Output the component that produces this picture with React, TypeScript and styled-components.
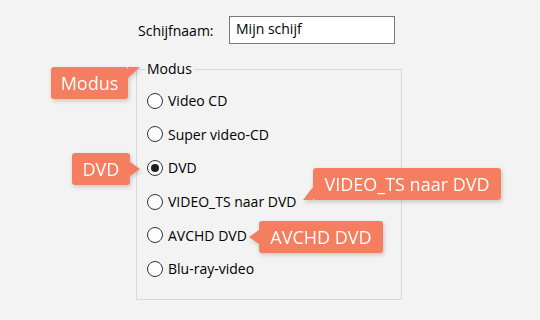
import React from 'react';
import styled, { createGlobalStyle, css } from 'styled-components';

const GlobalStyle = createGlobalStyle`
  html, body {
    margin: 0;
    padding: 0;
    background: #f3f3f3;
  }
  body {
    font-family: "Open Sans", "Noto Sans", sans-serif;
    color: #000;
  }
`;

type TailSide = 'topRight' | 'right' | 'bottomLeft' | 'left';

const Stage = styled.div`
  position: relative;
  width: 540px;
  height: 320px;
  overflow: hidden;
  padding: 16px 0 0 138px;
  box-sizing: border-box;
`;

const NameRow = styled.div`
  display: flex;
  align-items: center;
  gap: 16px;
  height: 28px;
`;

const FieldLabel = styled.label`
  font-size: 14px;
  width: 75px;
  white-space: nowrap;
`;

const NameInput = styled.div`
  width: 166px;
  height: 28px;
  box-sizing: border-box;
  background: #fff;
  border: 1px solid #7a7a7a;
  padding: 2px 6px;
  font-size: 14px;
  line-height: 20px;
`;

const GroupBox = styled.fieldset`
  margin: 17px 0 0 -2px;
  width: 266px;
  box-sizing: border-box;
  border: 1px solid #d9d9d9;
  padding: 7px 0 13px 8px;
`;

const GroupLegend = styled.legend`
  padding: 0 2px;
  font-size: 14px;
  line-height: 16px;
`;

const OptionList = styled.div`
  display: flex;
  flex-direction: column;
  padding-left: 2px;
`;

const Option = styled.div`
  display: flex;
  align-items: center;
  gap: 5px;
  height: 33.6px;
  font-size: 14px;
`;

const RadioDot = styled.span<{ $checked?: boolean }>`
  width: 16px;
  height: 16px;
  box-sizing: border-box;
  border-radius: 50%;
  border: 1px solid #333;
  background: #fdfdfd;
  display: flex;
  align-items: center;
  justify-content: center;

  &::after {
    content: '';
    width: 8px;
    height: 8px;
    border-radius: 50%;
    background: #1f1f1f;
    display: ${p => (p.$checked ? 'block' : 'none')};
  }
`;

const tails: Record<TailSide, ReturnType<typeof css>> = {
  topRight: css`
    left: 100%;
    top: 0;
    width: 12px;
    height: 11px;
    clip-path: polygon(0 0, 100% 0, 0 100%);
  `,
  right: css`
    left: 100%;
    top: calc(50% - 7px);
    width: 10px;
    height: 14px;
    clip-path: polygon(0 0, 100% 50%, 0 100%);
  `,
  bottomLeft: css`
    right: 100%;
    bottom: 0;
    width: 10px;
    height: 13px;
    clip-path: polygon(100% 0, 100% 100%, 0 100%);
  `,
  left: css`
    right: 100%;
    top: calc(50% - 7px);
    width: 10px;
    height: 14px;
    clip-path: polygon(100% 0, 0 50%, 100% 100%);
  `,
};

const Callout = styled.div<{ $tail: TailSide }>`
  position: absolute;
  height: 32px;
  box-sizing: border-box;
  background: #f47e5f;
  color: #fff;
  border-radius: 3px;
  font-family: "Open Sans", sans-serif;
  font-size: 18px;
  line-height: 32px;
  text-align: center;
  white-space: nowrap;
  filter: drop-shadow(1px 2px 2px rgba(0, 0, 0, 0.18));

  &::before {
    content: '';
    position: absolute;
    background: #f47e5f;
    ${p => tails[p.$tail]}
  }
`;

const modes = [
  { label: 'Video CD' },
  { label: 'Super video-CD' },
  { label: 'DVD', checked: true },
  { label: 'VIDEO_TS naar DVD' },
  { label: 'AVCHD DVD' },
  { label: 'Blu-ray-video' },
];

const notes: { text: string; tail: TailSide; left: number; top: number; width: number }[] = [
  { text: 'Modus', tail: 'topRight', left: 51, top: 67, width: 77 },
  { text: 'DVD', tail: 'right', left: 72, top: 153, width: 58 },
  { text: 'VIDEO_TS naar DVD', tail: 'bottomLeft', left: 313, top: 168, width: 188 },
  { text: 'AVCHD DVD', tail: 'left', left: 259, top: 221, width: 124 },
];

const App = () => {
  return (
    <Stage>
      <GlobalStyle />
      <NameRow>
        <FieldLabel>Schijfnaam:</FieldLabel>
        <NameInput>Mijn schijf</NameInput>
      </NameRow>
      <GroupBox>
        <GroupLegend>Modus</GroupLegend>
        <OptionList>
          {modes.map(m => (
            <Option key={m.label}>
              <RadioDot $checked={m.checked} />
              {m.label}
            </Option>
          ))}
        </OptionList>
      </GroupBox>
      {notes.map(n => (
        <Callout
          key={n.text}
          $tail={n.tail}
          style={{ left: n.left, top: n.top, width: n.width }}
        >
          {n.text}
        </Callout>
      ))}
    </Stage>
  );
};

export default App;
